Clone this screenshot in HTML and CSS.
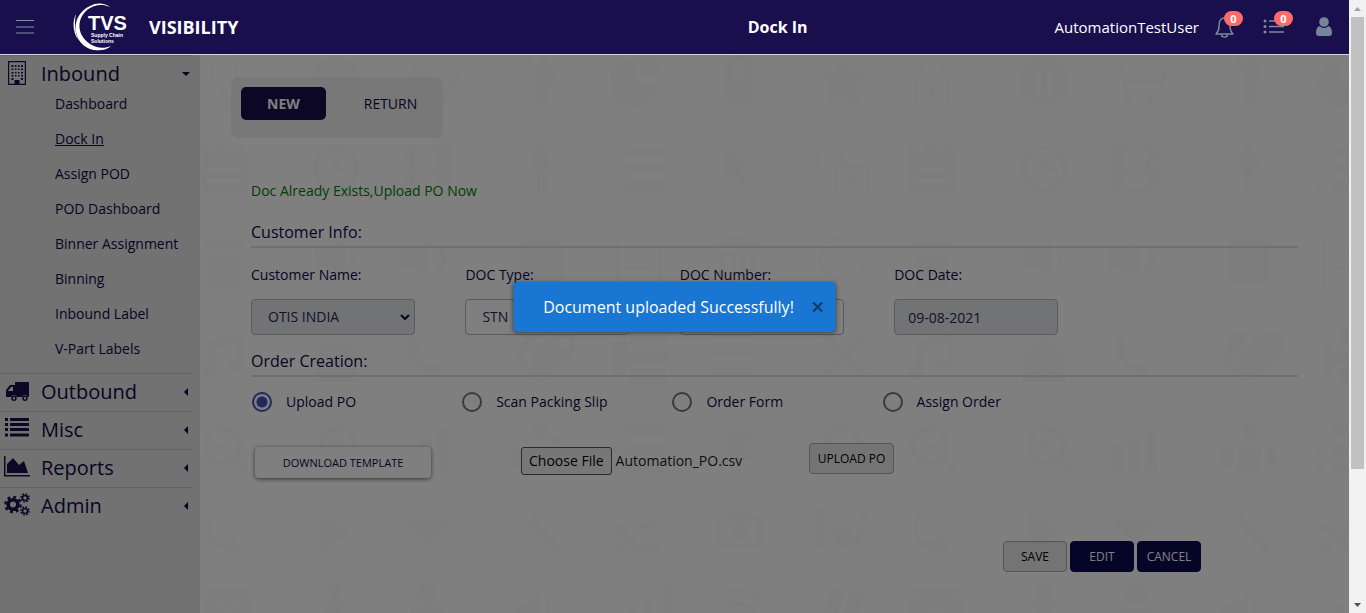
FILE: index.html
```html
<!DOCTYPE html>
<html lang="en">
<head>
<meta charset="utf-8">
<meta name="viewport" content="width=device-width, initial-scale=1">
<title>Visibility - Dock In</title>
<link rel="stylesheet" href="styles.css">
</head>
<body>
<div class="app">
  <header class="topbar">
    <div class="brand">
      <button class="icon-button menu-toggle" type="button" aria-label="Menu">
        <svg width="18" height="16" viewBox="0 0 18 16" stroke="#8290a0" stroke-width="1.2"><path d="M0 1.5h18M0 8h18M0 14h18"/></svg>
      </button>
      <svg class="logo" width="58" height="50" viewBox="0 0 58 50" fill="#fff" role="img" aria-label="TVS Supply Chain Solutions">
        <path d="M37 5C32 1 24 0 17 4C6 9 1 20 3 30C5 42 16 50 28 48C32 48 36 46 38 44C31 47 23 46 17 42C8 36 5 27 7 19C10 7 24-1 37 5Z"/>
        <path d="M3 12C-1 20 0 30 5 38C2 29 1 20 3 12Z"/>
        <text x="15" y="28" class="logo-name">TVS</text>
        <text x="18" y="35" class="logo-sub">Supply Chain</text>
        <text x="18" y="41" class="logo-sub">Solutions</text>
      </svg>
      <span class="product">VISIBILITY</span>
    </div>
    <h1 class="page-title">Dock In</h1>
    <div class="account">
      <span class="user-name">AutomationTestUser</span>
      <button class="icon-button bell" type="button" aria-label="Notifications">
        <svg width="20" height="22" viewBox="0 0 20 22" fill="none" stroke="#7c8c99" stroke-width="1.4" stroke-linejoin="round"><path d="M1 18h17c-2-2-3-4-3-8 0-5-2-8-5.500-8S4 5 4 10c0 4-1 6-3 8z"/><path d="M6.500 18.500c0 3.500 6 3.500 6 0"/></svg>
        <span class="badge">0</span>
      </button>
      <button class="icon-button tasks" type="button" aria-label="Tasks">
        <svg width="22" height="16" viewBox="0 0 22 16" fill="#7c8c99"><circle cx="2" cy="2" r="1.500"/><circle cx="2" cy="7.500" r="1.500"/><circle cx="2" cy="13" r="1.500"/><path d="M6 1.300h15v1.400H6zM6 6.800h15v1.400H6zM6 12.300h15v1.400H6z"/></svg>
        <span class="badge">0</span>
      </button>
      <button class="icon-button" type="button" aria-label="Profile">
        <svg width="16" height="20" viewBox="0 0 16 20" fill="#75869a"><circle cx="8" cy="5" r="4.800"/><path d="M3.500 9C1 10 0 12.500 0 16c0 2 1 3 3 3h10c2 0 3-1 3-3 0-3.500-1-6-3.500-7a6 6 0 0 1-9 0z"/></svg>
      </button>
    </div>
  </header>

  <div class="workspace">
    <nav class="sidebar" aria-label="Main">
      <section class="group open">
        <button class="group-title" type="button">
          <svg class="group-icon" viewBox="0 1 26 24"><path fill-rule="evenodd" d="M4 0h18v24H4zM5.200 1.200v21.600h5.300V19h5v3.800h5.300V1.200z"/><path d="M7.500 4h2v2h-2zm3.500 0h1.500v2H11zm3 0h1.500v2H14zm3 0h2v2h-2zM7.500 7.500h2v1.500h-2zm3.500 0h1.500V9H11zm3 0h1.500V9H14zm3 0h2V9h-2zM7.500 11h2v1.500h-2zm3.500 0h1.500v1.500H11zm3 0h1.500v1.500H14zm3 0h2v1.500h-2zM7.500 14h2v1.500h-2zm3.500 0h1.500v1.500H11zm3 0h1.500v1.500H14zm3 0h2v1.500h-2zM7.500 17h2v2h-2zm9.500 0h2v2h-2z"/></svg>
          <span class="group-name">Inbound</span>
          <svg class="caret" viewBox="0 0 8 8"><path d="M0 2h8L4 6z"/></svg>
        </button>
        <ul class="links">
          <li><a href="#dashboard">Dashboard</a></li>
          <li><a class="current" href="#dock-in">Dock In</a></li>
          <li><a href="#assign-pod">Assign POD</a></li>
          <li><a href="#pod-dashboard">POD Dashboard</a></li>
          <li><a href="#binner">Binner Assignment</a></li>
          <li><a href="#binning">Binning</a></li>
          <li><a href="#inbound-label">Inbound Label</a></li>
          <li><a href="#vpart">V-Part Labels</a></li>
        </ul>
      </section>
      <section class="group">
        <button class="group-title" type="button">
          <svg class="group-icon" viewBox="0 0 26 24"><path fill-rule="evenodd" d="M11 2h14v15h-1.200a3 3 0 0 0-5.600 0h-5.400a3 3 0 0 0-5.600 0H2v-7l4-5h5zM9 7H7l-3 4h5z"/><path fill-rule="evenodd" d="M10 15.500a2.700 2.700 0 1 1 0 5.400a2.700 2.700 0 1 1 0-5.400zm0 1.500a1.200 1.200 0 1 0 0 2.400a1.200 1.200 0 1 0 0-2.400zM21 15.500a2.700 2.700 0 1 1 0 5.400a2.700 2.700 0 1 1 0-5.400zm0 1.500a1.200 1.200 0 1 0 0 2.400a1.200 1.200 0 1 0 0-2.400z"/></svg>
          <span class="group-name">Outbound</span>
          <svg class="caret" viewBox="0 0 8 8"><path d="M6 0v8L2 4z"/></svg>
        </button>
      </section>
      <section class="group">
        <button class="group-title" type="button">
          <svg class="group-icon" viewBox="0 0 26 24"><path d="M1 0h3v3H1zm5 0h19v3H6zM1 5h3v3H1zm5 0h19v3H6zM1 10h3v3H1zm5 0h19v3H6zM1 15.500h3v3H1zm5 0h19v3H6z"/></svg>
          <span class="group-name">Misc</span>
          <svg class="caret" viewBox="0 0 8 8"><path d="M6 0v8L2 4z"/></svg>
        </button>
      </section>
      <section class="group">
        <button class="group-title" type="button">
          <svg class="group-icon" viewBox="0 1 26 24"><path d="M0 1h1.500v19H26v1.500H0zM3 18v-9l6-6 6 7 5-4 4 12z"/></svg>
          <span class="group-name">Reports</span>
          <svg class="caret" viewBox="0 0 8 8"><path d="M6 0v8L2 4z"/></svg>
        </button>
      </section>
      <section class="group">
        <button class="group-title" type="button">
          <svg class="group-icon" viewBox="0 1 26 24" fill="none"><g class="gear"><circle cx="9" cy="11.500" r="4.800" stroke-width="3.600"/><circle cx="9" cy="11.500" r="7.600" stroke-width="2.400" stroke-dasharray="2.980 2.980"/><circle cx="21" cy="5" r="2.500" stroke-width="1.600"/><circle cx="21" cy="5" r="4" stroke-width="1.600" stroke-dasharray="1.570 1.570"/><circle cx="21" cy="18" r="2.500" stroke-width="1.600"/><circle cx="21" cy="18" r="4" stroke-width="1.600" stroke-dasharray="1.570 1.570"/></g></svg>
          <span class="group-name">Admin</span>
          <svg class="caret" viewBox="0 0 8 8"><path d="M6 0v8L2 4z"/></svg>
        </button>
      </section>
    </nav>

    <main class="content">
      <svg class="wallpaper" width="100%" height="100%" aria-hidden="true">
        <defs>
          <pattern id="icons" width="708" height="640" patternUnits="userSpaceOnUse">
            <g class="motifs">
              <g transform="translate(24 25)"><path d="M-12 0v-10a12 14 0 0 1 24 0V0M-16 0h32v24h-32z" class="outline" stroke-width="3"/><path d="M-3 7h6v10h-6z"/></g>
              <path fill-rule="evenodd" d="M136 1a25 25 0 1 1 0 50a25 25 0 1 1 0-50zM127 13v26h6V13zm12 0v26h6V13z"/>
              <path d="M200 3l12 5 7 30h32l7-21h-40M218 27h36" class="outline" stroke-width="4"/><circle cx="220" cy="46" r="5"/><circle cx="241" cy="46" r="5"/>
              <circle cx="343" cy="5" r="4"/><path d="M328 3l3-1 4 7h13l7 10-3 10-4-1v23h-12V15l-8-5z"/>
              <path d="M434 4v24h24a24 24 0 1 1-24-24zM440-2a24 24 0 0 1 23 24h-23z"/>
              <path fill-rule="evenodd" d="M524 14a14 14 0 0 1 29 0v22a14 14 0 0 1-29 0zm11-5v12a4 4 0 0 0 8 0V9a4 4 0 0 0-8 0z"/>
              <path d="M643 1l7 17h19l-14 13 5 20-17-11-17 11 5-20-14-13h19z"/>

              <path fill-rule="evenodd" d="M1 91h5l7 7 6-7h5l7 7 6-7h5l6 7v39H1zM6 112v5h36v-5zm0 11v5h36v-5z"/>
              <g class="outline" stroke-width="5"><circle cx="136" cy="114" r="21"/><path d="M136 100v15h14"/></g>
              <path fill-rule="evenodd" d="M203 90h48v48h-48zM214 94v22h24V94zm0 26v14h24v-14zM205 94h5v5h-5zm0 12h5v5h-5zm0 12h5v5h-5zm0 12h5v5h-5zM243 94h5v5h-5zm0 12h5v5h-5zm0 12h5v5h-5zm0 12h5v5h-5z"/>
              <circle cx="341" cy="92" r="4"/><path d="M335 98h12l6 18-4 1-2-6v28h-5v-18h-1v18h-5v-28l-3 6-4-1z"/>
              <path d="M410 91l10 6-10 6zM410 108l10 6-10 6zM410 125l10 6-10 6zM425 92h39v9h-39zM425 109h39v9h-39zM425 126h39v9h-39z"/>
              <path d="M525 92l26 22-9 2 6 15-6 2-7-15-10 7z"/>
              <path d="M618 111v-10a12 12 0 0 1 24 0v10M636 111h32v26h-32z" class="outline" stroke-width="4"/><circle cx="652" cy="123" r="5"/>

              <path d="M15 187v-5h18v5" class="outline" stroke-width="3"/><path d="M4 187h40v7H4zM7 197h34v36H7z"/>
              <path d="M115 194h16l14-12v42l-14-12h-16zM151 194q8 9 0 18"/>
              <path d="M200 194h16l14-10v40l-14-10h-16zM236 192q10 11 0 22l4 4q14-16 0-30z"/>
              <rect x="319" y="185" width="44" height="43" rx="6"/>
              <path d="M417 178h32l10 10v48h-42zM423 195h30M423 204h30M423 213h30" class="outline" stroke-width="3"/>
              <path fill-rule="evenodd" d="M514 187h48v6h-48zM526 181h24v4h-24zM519 196h38v36h-38zM526 200v28h4v-28zm10 0v28h4v-28zm10 0v28h4v-28z"/>
              <circle cx="643" cy="204" r="22" class="outline" stroke-width="4" stroke-dasharray="108 30"/>

              <path d="M8 286l36-8v32a8 7 0 1 1-6-6v-16l-22 5v24a8 7 0 1 1-8-6z"/>
              <path d="M115 298l21-17 21 17-21 20zM115 303v24h42v-24l-21 17z"/>
              <path d="M207 285c4-6 10-2 12 4 1 6-3 7-3 10 2 5 6 9 11 11 5-3 6-5 12 0 6 4 3 8-3 10-12 2-34-18-29-35z"/>
              <path fill-rule="evenodd" d="M330 300l22-22h22v22l-30 26-14-13zM364 284a5 5 0 1 0 1 10a5 5 0 0 0-1-10zM325 278h18l-22 26 20 20-5 4-22-24z"/>
              <path d="M430 272h36v18h-36zM414 286h12v36h-12zM426 298h44v12h-44zM430 314h36v17h-36z"/>
              <path d="M512 277h40v7h-40zM512 295h40v7h-40zM512 313h40v7h-40z"/>
              <path d="M625 280l40 40M665 280l-40 40" class="outline" stroke-width="6"/>

              <g class="outline" stroke-width="6"><circle cx="22" cy="391" r="17"/><path d="M35 404l11 11M14 391h16"/><circle cx="840" cy="391" r="17"/><circle cx="138" cy="391" r="17"/><path d="M151 404l11 11M130 391h16M138 383v16"/></g>
              <path d="M203 390h12v26h-12zM220 383h12v33h-12zM237 374h12v42h-12z"/>
              <circle cx="341" cy="376" r="8"/><circle cx="326" cy="385" r="5"/><circle cx="356" cy="385" r="5"/><path d="M329 395q12-10 24 0v24h-24zM311 400q5-10 14-6v20h-14zM357 394q9-4 14 6v14h-14z"/>
              <path d="M410 370l10 6-10 6zM410 389l10 6-10 6zM410 408l10 6-10 6zM425 371h39v9h-39zM425 390h39v9h-39zM425 409h39v9h-39z"/>
              <path d="M520 372h4v44h-4zM526 374l30 6-18 14 18 10-30 2z"/>
              <g class="outline" stroke-width="6"><circle cx="641" cy="388" r="16"/><path d="M653 401l12 12"/></g>

              <path d="M40 454H26q-16 0-16 18t16 14h4v-7l12 12-12 10v-6h-4Q6 494 6 473t20-23h14z"/>
              <path d="M119 457l32 21-32 20zM201 463h52l-26 26z"/>
              <path d="M320 464l7 6 6-4-2-9q8 1 8 11l23 24q0 7-6 4l-24-24q-9 1-12-8z"/>
              <path d="M409 468h8q6 0 12 8t12 14h8v-6l12 9-12 9v-6h-9q-6-1-13-10t-12-10h-6zM409 492q10 1 14-6l3 4q-7 10-17 8zM436 474q6-8 13-7v-6l12 9-12 8v-5q-6 0-9 5z"/>
              <path fill-rule="evenodd" d="M515 462h12v-5h22v5h13v31h-47zM520 467v21h37v-21zM538 467a9 9 0 1 0 1 18a9 9 0 0 0-1-18z"/>
              <circle cx="620" cy="457" r="4"/><circle cx="665" cy="461" r="4"/><path d="M616 463h7l8 4-7 2v24h-8zM633 474h18v18h-18zM660 467l8 1-5 14v10h-11l3-14z"/>

              <path d="M2 534h52l-26 20zM2 538l26 20 26-20v38H2z"/>
              <path d="M129 530h13v18h10l-16 16-17-16h10z"/><circle cx="227" cy="540" r="11"/><path d="M211 554h32v30h-32z"/>
              <path d="M313 550h14l13-16v42l-13-14h-14zM345 540q10 10 0 24"/>
              <path d="M428 550h8v30h-8zM446 540h8v40h-8zM464 530h8v50h-8z"/>
              <g class="outline" stroke-width="5"><path d="M514 546q24-22 48 0M522 556q16-14 32 0"/></g>
              <path d="M630 532h16l-8 30h-16zM650 538h16l-8 26h-16z"/>
            </g>
          </pattern>
        </defs>
        <rect width="100%" height="100%" fill="url(#icons)"/>
      </svg>

      <div class="tabs">
        <button class="tab active" type="button">NEW</button>
        <button class="tab" type="button">RETURN</button>
      </div>

      <form class="dock-form">
        <p class="status">Doc Already Exists,Upload PO Now</p>

        <h2 class="section-title">Customer Info:</h2>
        <div class="fields">
          <div class="field">
            <label for="customer">Customer Name:</label>
            <div class="select-box">
              <select id="customer" disabled><option>OTIS INDIA</option></select>
              <svg class="chevron" viewBox="0 0 10 6"><path d="M1 1l4 4 4-4"/></svg>
            </div>
          </div>
          <div class="field">
            <label for="doc-type">DOC Type:</label>
            <div class="select-box">
              <select id="doc-type"><option>STN</option></select>
            </div>
          </div>
          <div class="field">
            <label for="doc-number">DOC Number:</label>
            <input id="doc-number" type="text">
          </div>
          <div class="field">
            <label for="doc-date">DOC Date:</label>
            <input class="date" id="doc-date" type="text" value="09-08-2021" disabled>
          </div>
        </div>

        <h2 class="section-title">Order Creation:</h2>
        <div class="choices">
          <label class="choice"><input type="radio" name="mode" checked>Upload PO</label>
          <label class="choice"><input type="radio" name="mode">Scan Packing Slip</label>
          <label class="choice"><input type="radio" name="mode">Order Form</label>
          <label class="choice"><input type="radio" name="mode">Assign Order</label>
        </div>

        <div class="upload">
          <button class="download" type="button">DOWNLOAD TEMPLATE</button>
          <div class="file">
            <input class="file-input" id="po-file" type="file">
            <label class="file-button" for="po-file">Choose File</label>
            <span class="file-name">Automation_PO.csv</span>
          </div>
          <button class="button upload-button" type="button">UPLOAD PO</button>
        </div>

        <div class="actions">
          <button class="button" type="button">SAVE</button>
          <button class="button primary" type="button">EDIT</button>
          <button class="button primary" type="button">CANCEL</button>
        </div>
      </form>
    </main>
    <div class="backdrop"></div>
  </div>

  <div class="toast" role="status">
    <span>Document uploaded Successfully!</span>
    <button class="toast-close" type="button" aria-label="Close">
      <svg width="12" height="12" viewBox="0 0 12 12"><path d="M1.500 1.500l9 9M10.500 1.500l-9 9"/></svg>
    </button>
  </div>
</div>

<div class="scrollbar" aria-hidden="true">
  <svg class="scroll-arrow" viewBox="0 0 17 17" fill="#a3a3a3"><path d="M5 11h7L8.500 7z"/></svg>
  <div class="scroll-track"><div class="scroll-thumb"></div></div>
  <svg class="scroll-arrow" viewBox="0 0 17 17" fill="#505050"><path d="M5 7h7l-3.500 4z"/></svg>
</div>
</body>
</html>
```

FILE: styles.css
```css
:root {
  --navy: #1a0f4d;
  --ink: #110848;
  --line: #dedede;
  --motif: #fbfbfb;
}

* { box-sizing: border-box; }

body {
  margin: 0;
  display: flex;
  height: 100vh;
  overflow: hidden;
  font-family: "Open Sans", "Noto Sans", sans-serif;
  font-size: 14px;
  line-height: 20px;
  color: var(--ink);
}

button, input, select { font: inherit; color: inherit; }
button { cursor: pointer; }
h1, h2, p, ul { margin: 0; padding: 0; }

.app {
  position: relative;
  flex: 1;
  min-width: 0;
  display: flex;
  flex-direction: column;
}

/* Top bar */
.topbar {
  display: grid;
  grid-template-columns: 58fr auto 42fr;
  align-items: center;
  height: 55px;
  flex: none;
  background: var(--navy);
  border-bottom: 1px solid #d5d5e0;
  color: #fff;
}
.brand { display: flex; align-items: center; padding-left: 16px; }
.icon-button {
  position: relative;
  display: flex;
  padding: 0;
  border: 0;
  background: none;
}
.logo { margin-left: 39px; }
.logo-name { font: bold 20px "Liberation Sans", sans-serif; }
.logo-sub { font: bold 5px "Liberation Sans", sans-serif; }
.product { margin-left: 18px; font-size: 18px; font-weight: 700; line-height: 24px; }
.page-title { font-size: 16px; font-weight: 700; line-height: 24px; }
.account {
  display: flex;
  align-items: center;
  justify-content: flex-end;
  padding-right: 17px;
}
.user-name { margin-right: 16px; font-size: 15px; }
.bell { margin-right: 28px; }
.tasks { margin-right: 31px; }
.badge {
  position: absolute;
  left: 9px;
  top: -5px;
  width: 19px;
  height: 15px;
  border-radius: 8px;
  background: #ff6b68;
  color: #fff;
  font-size: 11px;
  font-weight: 700;
  line-height: 15px;
  text-align: center;
}
.tasks .badge { left: 11px; top: -8px; }

/* Work area */
.workspace { position: relative; flex: 1; min-height: 0; display: flex; }
.backdrop { position: absolute; inset: 0; background: rgba(0, 0, 0, 0.5); }

.sidebar { width: 200px; flex: none; background: #e4e4e4; }
.group { width: 193px; border-top: 1px solid #c4c4c4; }
.group-title {
  display: flex;
  align-items: center;
  width: 100%;
  padding: 6px 3px 7px 4px;
  border: 0;
  background: none;
  font-size: 20px;
  line-height: 24px;
  text-align: left;
}
.open .group-title { padding-bottom: 0; }
.group-icon { width: 26px; height: 24px; fill: var(--navy); overflow: visible; }
.gear { fill: none; stroke: var(--navy); }
.group-name { flex: 1; padding-left: 11px; }
.caret { width: 8px; height: 8px; fill: var(--ink); }
.links { list-style: none; padding: 0 0 7px 55px; }
.links a {
  display: block;
  line-height: 35px;
  color: inherit;
  text-decoration: none;
}
.links .current { text-decoration: underline; }

.content {
  position: relative;
  flex: 1;
  min-width: 0;
  padding: 22px 51px 0 31px;
  background: #fff;
}
.wallpaper { position: absolute; inset: 0; }
.motifs { fill: var(--motif); }
.outline { fill: none; stroke: var(--motif); }
.tabs, .dock-form { position: relative; }

.tabs {
  display: flex;
  width: fit-content;
  gap: 22px;
  padding: 10px 10px 18px;
  border-radius: 8px;
  background: #f0f0f0;
}
.tab {
  width: 85px;
  height: 33px;
  padding: 0;
  border: 0;
  border-radius: 5px;
  background: none;
}
.tab.active { background: var(--navy); color: #fff; font-weight: 700; }

/* Form */
.dock-form { padding: 43px 0 0 20px; }
.status { color: #008000; margin-bottom: 19px; }
.section-title {
  padding-bottom: 2px;
  border-bottom: 2px solid var(--line);
  font-size: 16px;
  font-weight: 400;
  line-height: 24px;
}
.fields {
  display: grid;
  grid-template-columns: repeat(4, 20%);
  column-gap: 5px;
  padding: 17px 0 14px;
}
.field > label { display: block; margin-bottom: 14px; }
.field input, .field select {
  display: block;
  width: 100%;
  height: 36px;
  padding: 0 13px;
  border: 1px solid #b5b5b5;
  border-radius: 4px;
  background: #fff;
  color: #2b2450;
  opacity: 1;
  appearance: none;
}
.field select { padding: 0 16px; }
.field input, .select-box { width: 164px; }
.field :disabled { background: #e4e6ea; }
.select-box { position: relative; }
.chevron {
  position: absolute;
  right: 5px;
  top: 15px;
  width: 10px;
  height: 6px;
  fill: none;
  stroke: var(--ink);
  stroke-width: 2;
}

.choices {
  display: grid;
  grid-template-columns: repeat(4, 20%);
  column-gap: 1px;
  padding: 15px 0 0 1px;
}
.choice { display: flex; align-items: center; gap: 14px; }
.choice input {
  appearance: none;
  width: 20px;
  height: 20px;
  margin: 0;
  border: 2px solid #757575;
  border-radius: 50%;
}
.choice input:checked {
  border-color: #4152b8;
  background: radial-gradient(circle, #4152b8 5px, transparent 6px);
}

.upload {
  display: grid;
  grid-template-columns: 270fr 288fr 489fr;
  align-items: center;
  padding-top: 31px;
}
.download {
  width: 176px;
  height: 31px;
  margin: 4px 0 0 4px;
  border: 0;
  border-radius: 4px;
  background: #fff;
  box-shadow: 0 1px 4px rgba(0, 0, 0, 0.6);
  font-size: 11px;
}
.file { display: flex; align-items: center; gap: 4px; color: #222; }
.file-input { position: absolute; width: 1px; height: 1px; opacity: 0; }
.file-button {
  padding: 3px 7px;
  border: 1px solid #555;
  border-radius: 3px;
  background: #efefef;
  color: #000;
}
.button {
  min-width: 64px;
  height: 31px;
  padding: 0 6px;
  border: 1px solid #a8a8a8;
  border-radius: 4px;
  background: #e9e9e9;
  color: #000;
  font-size: 12px;
  white-space: nowrap;
}
.upload-button { width: 85px; margin-bottom: 4px; }
.button.primary { border-color: #0a0a50; background: #0a0a50; color: #fff; }
.actions { display: flex; justify-content: flex-end; gap: 3px; padding: 63px 97px 0 0; }

/* Toast */
.toast {
  position: absolute;
  left: 50%;
  top: 50vh;
  transform: translate(-50%, -50%);
  display: flex;
  align-items: center;
  gap: 18px;
  padding: 13px 12px 13px 30px;
  border-radius: 4px;
  background: #1976d2;
  box-shadow: 0 1px 4px rgba(0, 0, 0, 0.5);
  color: #fff;
  font-size: 16px;
  line-height: 24px;
  white-space: nowrap;
}
.toast-close { display: flex; padding: 0; border: 0; background: none; }
.toast-close path { stroke: #0d3c6b; stroke-width: 2; }

/* Scrollbar */
.scrollbar { width: 17px; flex: none; display: flex; flex-direction: column; background: #f1f1f1; }
.scroll-arrow { width: 17px; height: 17px; }
.scroll-track { flex: 1; padding: 0 2px; }
.scroll-thumb { height: 78%; background: #c1c1c1; }
```
